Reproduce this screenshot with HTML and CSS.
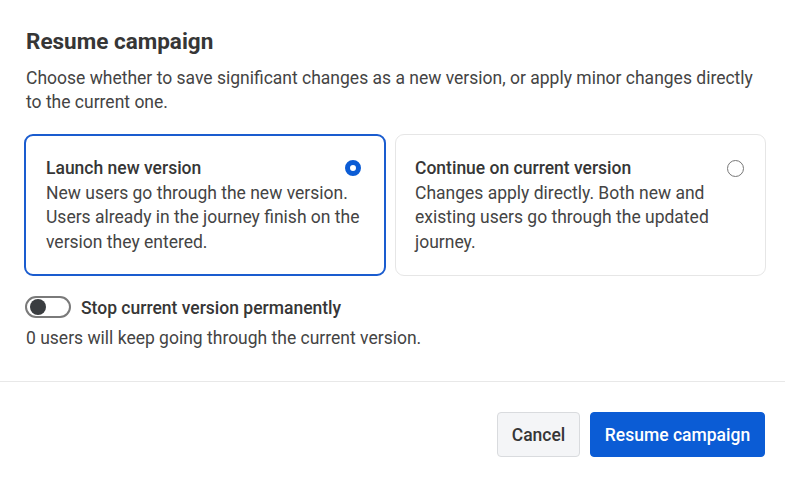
FILE: index.html
```html
<!DOCTYPE html>
<html>
<head>
<meta charset="utf-8">
<link rel="stylesheet" href="styles.css">
</head>
<body>
<div class="dialog">
  <div class="content">
    <h1 class="title">Resume campaign</h1>
    <p class="desc">Choose whether to save significant changes as a new version, or apply minor changes directly to the current one.</p>
    <div class="options">
      <div class="card selected">
        <div class="card-head">
          <span class="card-title">Launch new version</span>
          <span class="radio on"></span>
        </div>
        <div class="card-body">New users go through the new version. Users already in the journey finish on the version they entered.</div>
      </div>
      <div class="card">
        <div class="card-head">
          <span class="card-title">Continue on current version</span>
          <span class="radio"></span>
        </div>
        <div class="card-body">Changes apply directly. Both new and existing users go through the updated journey.</div>
      </div>
    </div>
    <div class="toggle-row">
      <span class="switch"><span class="knob"></span></span>
      <span class="toggle-label">Stop current version permanently</span>
    </div>
    <p class="note">0 users will keep going through the current version.</p>
  </div>
  <div class="footer">
    <button class="btn secondary">Cancel</button>
    <button class="btn primary">Resume campaign</button>
  </div>
</div>
</body>
</html>
```
FILE: styles.css
```css
html, body {
  margin: 0;
  padding: 0;
  background: #ffffff;
}
body {
  font-family: Roboto, "Liberation Sans", Arial, sans-serif;
  color: #3d3d3d;
  width: 785px;
  height: 480px;
  overflow: hidden;
}
.content {
  padding: 27px 19px 0 24px;
}
.title {
  margin: 0 0 0 2px;
  font-size: 22.5px;
  line-height: 28px;
  font-weight: 700;
  color: #363636;
}
.desc {
  margin: 11px 0 0 2px;
  font-size: 17.5px;
  line-height: 24px;
  color: #444444;
}
.options {
  display: grid;
  grid-template-columns: 362px 1fr;
  column-gap: 9px;
  margin-top: 20px;
}
.card {
  border: 1px solid #e6e6e6;
  border-radius: 9px;
  padding: 21px 21px 21px 19px;
  font-size: 17.5px;
  line-height: 24.5px;
  color: #444444;
}
.card.selected {
  border: 2px solid #1a5ccf;
  padding: 20px 22px 20px 20px;
}
.card-head {
  display: flex;
  justify-content: space-between;
  align-items: center;
}
.card-title {
  font-weight: 500;
  color: #363636;
}
.radio {
  flex: none;
  box-sizing: border-box;
  width: 17px;
  height: 17px;
  border: 1.6px solid #777777;
  border-radius: 50%;
}
.radio.on {
  width: 16px;
  height: 16px;
  border: 5px solid #0b5cd5;
  margin-right: 1px;
}
.toggle-row {
  display: flex;
  align-items: center;
  margin-top: 20px;
  margin-left: 1px;
}
.switch {
  box-sizing: border-box;
  width: 46px;
  height: 22px;
  border: 2px solid #7a7a7a;
  border-radius: 11px;
  display: flex;
  align-items: center;
  padding-left: 3px;
  margin-top: -3px;
}
.knob {
  width: 16px;
  height: 16px;
  border-radius: 50%;
  background: #3a3d40;
}
.toggle-label {
  margin-left: 10px;
  font-size: 17.5px;
  line-height: 24px;
  font-weight: 500;
  color: #363636;
}
.note {
  margin: 6px 0 0 2px;
  font-size: 17.5px;
  line-height: 24px;
  color: #444444;
}
.footer {
  margin-top: 31px;
  border-top: 1px solid #e8e8e8;
  padding: 30px 20px 0 0;
  display: flex;
  justify-content: flex-end;
  gap: 10px;
}
.btn {
  font-family: Roboto, "Liberation Sans", Arial, sans-serif;
  font-size: 17.5px;
  font-weight: 500;
  height: 45px;
  border-radius: 4px;
  cursor: pointer;
}
.btn.secondary {
  width: 83px;
  background: #f4f5f7;
  border: 1px solid #d9dbde;
  color: #363636;
}
.btn.primary {
  width: 175px;
  background: #0b5cd5;
  border: 1px solid #0b5cd5;
  color: #ffffff;
}
```
